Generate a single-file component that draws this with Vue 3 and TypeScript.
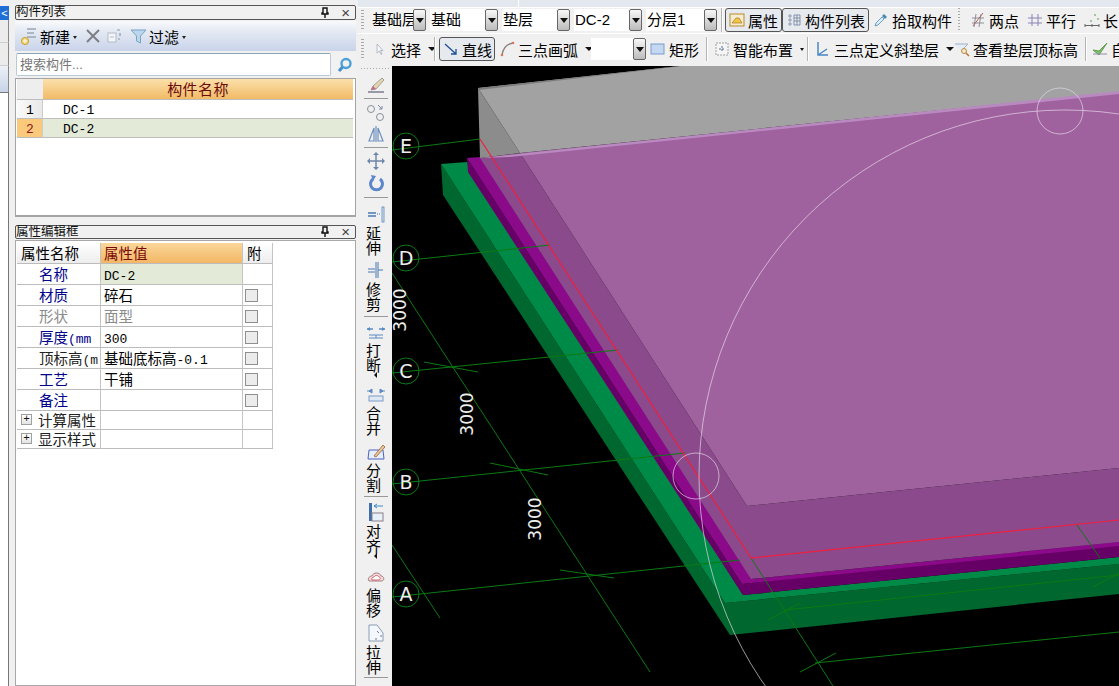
<template>
  <div class="app">
    <!-- collapsed nav strip -->
    <div class="strip">
      <div class="strip-tab">&lt;</div>
      <div class="strip-item"></div>
      <div class="strip-item"></div>
      <div class="strip-active"></div>
      <div class="strip-body"></div>
    </div>

    <div class="side">
      <div class="title-bar">
        <span class="title-text">构件列表</span>
        <svg class="pin" width="10" height="12" viewBox="0 0 10 12"><path d="M3 1h4v5h1v1H2V6h1zM5 7v4" fill="none" stroke="#111" stroke-width="1.4" /></svg>
        <span class="close">×</span>
      </div>
      <div class="list-tools">
        <svg width="18" height="20" viewBox="0 0 18 20">
          <path d="M7 3h9M7 7h7M7 11h9" stroke="#9aa5b5" stroke-width="1.3" />
          <circle cx="5" cy="15" r="3.6" fill="#f3d36a" stroke="#c9a23a" />
          <path d="M5 13v4M3 15h4" stroke="#fff" />
        </svg>
        <span class="tool-label">新建</span><i class="tiny-arrow"></i>
        <svg class="gap-wide" width="16" height="16" viewBox="0 0 16 16"><path d="M2 2l12 12M14 2L2 14" stroke="#7d7f84" stroke-width="2" /></svg>
        <svg class="gap-narrow" width="16" height="16" viewBox="0 0 16 16">
          <rect x="2" y="5" width="8" height="9" fill="#f4f5f8" stroke="#b4bac6" /><path d="M4 9h4" stroke="#b4bac6" />
          <path d="M11 2h3M14 5v3M12 11h2" stroke="#8e9ab0" stroke-width="1.2" />
        </svg>
        <svg class="gap-wide" width="17" height="16" viewBox="0 0 17 16"><path d="M1 2h15l-5.5 6v7l-4-2V8z" fill="#bcd6ec" stroke="#7ba3c6" /></svg>
        <span class="tool-label">过滤</span><i class="tiny-arrow"></i>
      </div>
      <div class="search-row">
        <div class="search-box">搜索构件...</div>
        <svg width="18" height="18" viewBox="0 0 18 18"><circle cx="10" cy="7.500" r="4.500" fill="none" stroke="#4d9fd8" stroke-width="2.400" /><path d="M6.500 11L3 15" stroke="#3f8fca" stroke-width="3" /></svg>
      </div>
      <div class="list-box">
        <div class="list-grid">
          <div class="cell corner"></div>
          <div class="cell head-orange">构件名称</div>
          <template v-for="(row, i) in listRows" :key="row">
            <div class="cell row-no" :class="{ 'row-no-on': i === 1 }">{{ i + 1 }}</div>
            <div class="cell row-name" :class="{ 'row-on': i === 1 }">{{ row }}</div>
          </template>
        </div>
      </div>

      <div class="title-bar second">
        <span class="title-text">属性编辑框</span>
        <svg class="pin" width="10" height="12" viewBox="0 0 10 12"><path d="M3 1h4v5h1v1H2V6h1zM5 7v4" fill="none" stroke="#111" stroke-width="1.4" /></svg>
        <span class="close">×</span>
      </div>
      <div class="prop-box">
        <div class="prop-grid">
          <div class="pc p-head">属性名称</div>
          <div class="pc p-head-on">属性值</div>
          <div class="pc p-head">附</div>
          <template v-for="p in props" :key="p.name">
            <div class="pc p-name" :class="[p.tone, { short: p.group }]">
              <span v-if="p.group" class="plus">+</span>
              <span class="name-text">{{ p.name }}<span v-if="p.unit" class="latin">{{ p.unit }}</span></span>
            </div>
            <div class="pc p-val" :class="{ 'p-val-on': p.selected, muted: p.tone === 'grey', short: p.group }">
              {{ p.value }}<span v-if="p.num" class="latin">{{ p.num }}</span>
            </div>
            <div class="pc p-chk" :class="{ short: p.group }"><i v-if="p.check" class="check"></i></div>
          </template>
        </div>
      </div>
    </div>

    <div class="main">
      <div class="top-strip"></div>
      <div class="bar">
        <i class="grip"></i>
        <template v-for="(it, i) in rowOne" :key="i">
          <div v-if="it.kind === 'combo'" class="combo" :class="{ plain: it.plain }" :style="{ width: it.w + 'px', marginLeft: it.x + 'px' }">
            <span class="combo-text">{{ it.text }}</span><i class="combo-btn"></i>
          </div>
          <i v-else-if="it.kind === 'sep'" class="bar-sep" :class="{ dotted: it.dotted }" :style="{ marginLeft: it.x + 'px' }"></i>
          <div v-else class="btn" :class="{ active: it.active }" :style="{ width: it.w + 'px', marginLeft: it.x + 'px', paddingLeft: (it.pad ?? 1) + 'px' }">
            <svg width="16" height="16" viewBox="0 0 16 16" v-html="barIcons[it.icon!]"></svg>
            <span>{{ it.text }}</span>
          </div>
        </template>
      </div>
      <div class="bar bar-two">
        <i class="grip"></i>
        <template v-for="(it, i) in rowTwo" :key="i">
          <div v-if="it.kind === 'combo'" class="combo" :style="{ width: it.w + 'px', marginLeft: it.x + 'px' }">
            <span class="combo-text">{{ it.text }}</span><i class="combo-btn"></i>
          </div>
          <i v-else-if="it.kind === 'sep'" class="bar-sep" :style="{ marginLeft: it.x + 'px' }"></i>
          <div v-else class="btn" :class="{ active: it.active }" :style="{ width: it.w + 'px', marginLeft: it.x + 'px', paddingLeft: (it.pad ?? 1) + 'px' }">
            <svg width="16" height="16" viewBox="0 0 16 16" v-html="barIcons[it.icon!]"></svg>
            <span>{{ it.text }}</span>
            <i v-if="it.arrow" class="drop" :class="{ small: it.arrow === 'small' }"></i>
          </div>
        </template>
      </div>

      <div class="work">
        <div class="vbar">
          <i class="vgrip"></i>
          <template v-for="(t, i) in vtools" :key="i">
            <i v-if="t.sep" class="vsep" :style="{ marginTop: t.mt + 'px' }"></i>
            <div v-else class="vtool" :style="{ marginTop: t.mt + 'px' }">
              <svg width="20" height="22" viewBox="0 0 20 22" v-html="vIcons[t.icon!]"></svg>
              <span v-for="ch in t.label" :key="ch" class="vchar">{{ ch }}</span>
              <i v-if="t.arrow" class="varrow"></i>
            </div>
          </template>
        </div>

        <svg class="canvas" viewBox="392 66 727 620" width="727" height="620">
          <rect x="392" y="66" width="727" height="620" fill="#000" />

          <!-- foundation, green -->
          <polygon points="441,164 443,195 730,635 1119,594 1119,564 725,603" fill="#00672f" />
          <polygon points="441,164 467,162 743,595 1119,557 1119,564 725,603" fill="#008a48" />
          <!-- cushion, purple -->
          <polygon points="467,158 468,172 743,595 1119,557 1119,540 742,584" fill="#660066" />
          <polygon points="467,158 481,157 752,579 1119,542 1119,546 742,584" fill="#8a0a8a" />
          <!-- translucent slab over the box -->
          <polygon points="480,158 751,579 1119,542 1119,468 747,506 520,153" fill="#8a4a8b" />
          <polygon points="520,153 747,506 1119,468 1119,92" fill="#a0619f" />
          <polygon points="478,88 480,158 520,153" fill="#8c8c8c" />
          <polygon points="478,88 680,66 1119,66 1119,92 520,153" fill="#a2a2a2" />
          <polygon points="480,158 1119,91 1119,94 510,157" fill="#b98ac0" />
          <polygon points="478,88 680,66 682,66 479,90" fill="#7d7d7d" />

          <!-- axis lines -->
          <g stroke="#0b7a12" stroke-width="1" fill="none">
            <path d="M392 150L480 139M392 262L550 245M392 373L618 350M392 484L685 453M392 597L740 560" />
            <path d="M392 273L650 672M392 545L440 618" />
            <path d="M424 362L478 372M490 463L548 475M560 570L614 578" />
            <path d="M751 558L833 686M768 620L800 603M785 610L1119 575M815 663L1119 632M800 672L836 653" />
            <path d="M1077 525L1100 558M1093 587L1119 573" />
          </g>
          <g stroke="#0a7a14" stroke-width="1" fill="none">
            <circle cx="406" cy="146" r="13" /><circle cx="406" cy="258" r="13" /><circle cx="406" cy="371" r="13" />
            <circle cx="406" cy="482" r="13" /><circle cx="406" cy="594" r="13" />
          </g>
          <path d="M480 139L751 558L1119 520" stroke="#ee2040" stroke-width="1.200" fill="none" />

          <!-- snap circles -->
          <g stroke="#e6dce8" stroke-opacity=".75" fill="none" stroke-width=".9">
            <circle cx="1065" cy="476" r="366" />
            <circle cx="696" cy="476" r="23" />
            <circle cx="1060" cy="111" r="23" />
          </g>

          <g class="axis-text">
            <text x="406" y="153">E</text><text x="406" y="265">D</text><text x="406" y="378">C</text>
            <text x="406" y="489">B</text><text x="406" y="601">A</text>
          </g>
          <g class="dim-text">
            <text transform="translate(406 310) rotate(-90)">3000</text>
            <text transform="translate(473 414) rotate(-90)">3000</text>
            <text transform="translate(541 519) rotate(-90)">3000</text>
          </g>
        </svg>
      </div>
    </div>
  </div>
</template>

<script setup lang="ts">
interface BarItem {
  kind: 'combo' | 'sep' | 'btn'
  x: number
  w?: number
  pad?: number
  text?: string
  icon?: string
  active?: boolean
  plain?: boolean
  dotted?: boolean
  arrow?: boolean | 'small'
}

interface VTool {
  mt: number
  sep?: boolean
  icon?: string
  label?: string
  arrow?: boolean
}

const listRows = ['DC-1', 'DC-2']

const props = [
  { name: '名称', value: '', num: 'DC-2', tone: 'blue', selected: true, check: false },
  { name: '材质', value: '碎石', tone: 'blue', check: true },
  { name: '形状', value: '面型', tone: 'grey', check: true },
  { name: '厚度', unit: '(mm', value: '', num: '300', tone: 'blue', check: true },
  { name: '顶标高', unit: '(m', value: '基础底标高', num: '-0.1', tone: 'dark', check: true },
  { name: '工艺', value: '干铺', tone: 'blue', check: true },
  { name: '备注', value: '', tone: 'blue', check: true },
  { name: '计算属性', value: '', tone: 'dark', group: true, check: false },
  { name: '显示样式', value: '', tone: 'dark', group: true, check: false }
]

// x = gap from the previous item
const rowOne: BarItem[] = [
  { kind: 'combo', x: 7, w: 55, text: '基础层', plain: true },
  { kind: 'combo', x: 4, w: 68, text: '基础' },
  { kind: 'combo', x: 4, w: 68, text: '垫层' },
  { kind: 'combo', x: 4, w: 68, text: 'DC-2' },
  { kind: 'combo', x: 4, w: 71, text: '分层1' },
  { kind: 'sep', x: 4 },
  { kind: 'btn', x: 2, w: 57, pad: 3, text: '属性', icon: 'prop', active: true },
  { kind: 'btn', x: 0, w: 87, pad: 3, text: '构件列表', icon: 'list', active: true },
  { kind: 'btn', x: 3, w: 81, pad: 0, text: '拾取构件', icon: 'dropper' },
  { kind: 'sep', x: 5, dotted: true },
  { kind: 'btn', x: 8, w: 52, text: '两点', icon: 'twopt' },
  { kind: 'btn', x: 5, w: 52, text: '平行', icon: 'parallel' },
  { kind: 'btn', x: 5, w: 37, text: '长', icon: 'length' }
]

const rowTwo: BarItem[] = [
  { kind: 'btn', x: 6, w: 64, text: '选择', icon: 'pointer', arrow: true },
  { kind: 'sep', x: 0 },
  { kind: 'btn', x: 3, w: 56, pad: 3, text: '直线', icon: 'line', active: true },
  { kind: 'btn', x: 2, w: 94, text: '三点画弧', icon: 'arc', arrow: true },
  { kind: 'combo', x: 0, w: 55, text: '' },
  { kind: 'btn', x: 2, w: 54, text: '矩形', icon: 'rect' },
  { kind: 'sep', x: 4 },
  { kind: 'btn', x: 4, w: 91, text: '智能布置', icon: 'smart', arrow: 'small' },
  { kind: 'sep', x: 4 },
  { kind: 'btn', x: 4, w: 139, text: '三点定义斜垫层', icon: 'slope', arrow: true },
  { kind: 'btn', x: 0, w: 128, text: '查看垫层顶标高', icon: 'view' },
  { kind: 'sep', x: 5 },
  { kind: 'btn', x: 3, w: 37, text: '自', icon: 'auto' }
]

const vtools: VTool[] = [
  { mt: 0, icon: 'brush' },
  { mt: 1, sep: true },
  { mt: 0, icon: 'circles' },
  { mt: 0, icon: 'mirror' },
  { mt: 1, sep: true },
  { mt: 0, icon: 'move' },
  { mt: 1, icon: 'rotate' },
  { mt: 1, sep: true },
  { mt: 3, icon: 'extend', label: '延伸' },
  { mt: 4, icon: 'trim', label: '修剪' },
  { mt: 4, sep: true },
  { mt: 1, icon: 'break', label: '打断', arrow: true },
  { mt: 5, icon: 'merge', label: '合并' },
  { mt: 5, icon: 'split', label: '分割' },
  { mt: 3, sep: true },
  { mt: 2, icon: 'align', label: '对齐', arrow: true },
  { mt: 6, icon: 'offset', label: '偏移' },
  { mt: 5, icon: 'stretch', label: '拉伸' },
  { mt: 2, sep: true }
]

const barIcons: Record<string, string> = {
  prop: '<rect x="1" y="2" width="14" height="12" fill="#f6ecd2" stroke="#b98a2c"/><path d="M3 11l4-5h3l3 5z" fill="#f3c648" stroke="#a8781c" stroke-width=".7"/>',
  list: '<path d="M3 3h2v2H3zM3 7h2v2H3zM3 11h2v2H3z" fill="none" stroke="#7f8ea8" stroke-width=".8"/><path d="M8 3h6v10H8zM8 6h6M8 9h6M11 3v10" fill="none" stroke="#6f7f9a" stroke-width=".8"/>',
  dropper: '<path d="M2 14l1-3 6-6 2 2-6 6z" fill="#d9ecf7" stroke="#6f9fc0"/><path d="M9 4l2-2 3 3-2 2z" fill="#4c86b4"/>',
  twopt: '<path d="M2 6h12M2 11h12M6 2l-2 13M11 2l-2 13" stroke="#8d8f99"/><path d="M13 1L3 14" stroke="#b5655c"/>',
  parallel: '<path d="M1 6h14M1 11h14M5 2v12M11 2v12" stroke="#8b83b5"/>',
  length: '<path d="M1 12v3M8 12v3M15 12v3M1 13.500h14" stroke="#666"/><path d="M10 3h2M14 6v2M6 9h2" stroke="#5b9a55"/>',
  pointer: '<path d="M5 3v9l2.500-2 1.500 3.500 1-.5-1.500-3.500h2.500z" fill="#f4f6fa" stroke="#a8b0bc" stroke-width=".8"/>',
  line: '<path d="M2 3l11 10M13 8v5H8" fill="none" stroke="#1f4f9a" stroke-width="1.300"/>',
  arc: '<path d="M3 14C4 7 8 3 14 2" fill="none" stroke="#8d7f7a" stroke-width="1.300"/><circle cx="3" cy="14" r="1.300" fill="#d9765f"/><circle cx="14" cy="2" r="1.300" fill="#d9765f"/>',
  rect: '<rect x="1" y="3" width="13" height="10" fill="#c4d8f2" stroke="#7c9ccb"/>',
  smart: '<rect x="2" y="2" width="12" height="12" fill="#f5f5f5" stroke="#a0a0a0" stroke-dasharray="2 1"/><path d="M8 5v6M5 8h6" stroke="#4f6f95" stroke-dasharray="2 1"/>',
  slope: '<path d="M3 1v13h10M3 14l9-6" fill="none" stroke="#4a87c4" stroke-width="1.500"/>',
  view: '<path d="M1 3h13L9 8v4" fill="#e6edf5" stroke="#9fb1c6"/><circle cx="10" cy="10" r="2.500" fill="#f6e7c4" stroke="#b58c4a"/><path d="M12 12l3 3" stroke="#b0763a" stroke-width="1.500"/>',
  auto: '<path d="M1 9l6 5 8-12-8 8z" fill="#7fc06a" stroke="#5f9c4c"/><path d="M1 13h14" stroke="#8f8fb0"/>'
}

const vIcons: Record<string, string> = {
  brush: '<path d="M2 18h16" stroke="#7c7c90" stroke-width="1.500"/><path d="M5 16l2-4 9-8 2 2-8 9z" fill="#e7d4a8" stroke="#a0a0a0"/><path d="M5 16l2-4 3 3z" fill="#c0688a"/>',
  circles: '<circle cx="5" cy="8" r="3.500" fill="none" stroke="#8a8f9c"/><circle cx="14" cy="16" r="3.500" fill="none" stroke="#8a8f9c"/><path d="M12 4l4 4M16 5v3h-3" stroke="#7a8aa8" fill="none"/>',
  mirror: '<path d="M10 3v16M8 5L3 18h5zM12 5l5 13h-5z" fill="none" stroke="#6f8fc0" stroke-width="1.200"/>',
  move: '<path d="M10 4v14M3 11h14" stroke="#6f86a8" stroke-width="1.500"/><path d="M10 2l3 3H7zM10 20l3-3H7zM1 11l3-3v6zM19 11l-3-3v6z" fill="#6f86a8"/>',
  rotate: '<path d="M14 6a6 6 0 1 1-7 0" fill="none" stroke="#5b86cc" stroke-width="3"/><path d="M5 2l5 1-3 5z" fill="#5b86cc"/>',
  extend: '<path d="M2 10h8M2 13h8" stroke="#4a78b0" stroke-width="1.300"/><path d="M11 11h4" stroke="#4a78b0" stroke-dasharray="1 1"/><rect x="16" y="4" width="2" height="15" fill="#dbe7f5" stroke="#4a78b0" stroke-width=".7"/>',
  trim: '<path d="M2 10h7M2 13h7M12 11h5" stroke="#4a78b0" stroke-width="1.200"/><path d="M10 3v16M12 3v16" stroke="#4a78b0" stroke-width="1"/>',
  break: '<path d="M1 9h6M13 9h6" stroke="#5a8ac0" stroke-width="1.300"/><path d="M1 9l3-2v4zM19 9l-3-2v4z" fill="#5a8ac0"/><path d="M3 15h14M3 18h14M10 15v3" stroke="#5a8ac0"/>',
  merge: '<path d="M3 8l3-2v4zM17 8l-3-2v4zM1 8h4M15 8h4" fill="#5a8ac0" stroke="#5a8ac0"/><rect x="3" y="13" width="14" height="5" fill="#dfe9f6" stroke="#7a9ac4"/>',
  split: '<path d="M3 10h14l1 9H2z" fill="#e6eefa" stroke="#4a63c0"/><path d="M8 16l9-11 2 2-9 10z" fill="#e9c79a" stroke="#a57a58"/>',
  align: '<rect x="3" y="2" width="3" height="18" fill="#3f6ea8"/><path d="M8 5h9M11 3L8 5l3 2" fill="none" stroke="#3f8ac8"/><rect x="6" y="12" width="11" height="8" fill="#e8f0fa" stroke="#8a7f88"/>',
  offset: '<path d="M3 16c-2-3 1-5 3-5 1-4 8-4 9 0 3 0 4 4 1 5z" fill="#f5d8d8" stroke="#a98088"/><path d="M6 15c-1-2 1-3 2-3 1-2 4-2 5 0 1 0 2 2 0 3z" fill="#fff" stroke="#c86870"/>',
  stretch: '<path d="M3 3h8l6 8v8H3z" fill="#f4f7fb" stroke="#8a9cb4"/><path d="M11 9l2 2M14 14h2M9 17h2" stroke="#6a7c94"/>'
}
</script>

<style>
html, body { margin: 0; background: #f0f0f0; overflow: hidden; }
</style>

<style scoped>
.app {
  display: flex;
  width: 1119px;
  height: 686px;
  overflow: hidden;
  background: #f0f0f0;
  color: #000;
  font-family: "Liberation Sans", "Noto Sans CJK SC", sans-serif;
  font-size: 15px;
}

/* left strip */
.strip {
  width: 9px;
  margin-right: 6px;
  flex: none;
  display: flex;
  flex-direction: column;
  padding-top: 6px;
}
.strip-tab {
  height: 14px;
  background: #1f6fd6;
  color: #fff;
  font-size: 11px;
  line-height: 14px;
  text-align: center;
}
.strip-item { height: 23px; background: #ececec; border-bottom: 1px solid #cfcfcf; border-right: 1px solid #888; box-sizing: border-box; }
.strip-active { height: 26px; background: linear-gradient(#edf1f8, #c8d3e8); border-right: 1px solid #888; box-sizing: border-box; }
.strip-body { flex: 1; background: #fff; border-right: 1px solid #777; border-top: 1px solid #777; }

/* side panels */
.side {
  width: 341px;
  flex: none;
  padding-top: 5px;
  margin-right: 2px;
  display: flex;
  flex-direction: column;
  box-sizing: border-box;
}
.title-bar {
  height: 15px;
  box-sizing: border-box;
  border: 1px solid #555;
  border-radius: 2px;
  background: #f1f1f1;
  display: flex;
  align-items: center;
  padding-right: 5px;
}
.title-bar.second { margin-top: 8px; height: 14px; }
.title-text { font-size: 12.500px; line-height: 13px; flex: 1; color: #111; white-space: nowrap; }
.pin { margin-right: 11px; }
.close { font-size: 15px; line-height: 12px; color: #444; }

.list-tools {
  height: 30px;
  margin-top: 1px;
  background: linear-gradient(#f9fafc, #e6ebf4 30%, #c9d4ea);
  display: flex;
  align-items: center;
  padding-left: 5px;
  box-sizing: border-box;
}
.list-tools svg { flex: none; }
.tool-label { margin-left: 2px; }
.tiny-arrow {
  margin-left: 3px;
  border: 2.500px solid transparent;
  border-top: 3px solid #222;
  margin-top: 4px;
}
.gap-wide { margin-left: 8px; }
.gap-narrow { margin-left: 5px; }

.search-row {
  height: 25px;
  margin-top: 1px;
  display: flex;
  align-items: center;
  gap: 5px;
  padding-left: 1px;
  background: #f1f1f1;
}
.search-box {
  width: 315px;
  height: 23px;
  box-sizing: border-box;
  border: 1px solid #b9c9d6;
  border-top-color: #8aa5b8;
  border-radius: 2px;
  background: #fff;
  color: #777;
  font-size: 13px;
  line-height: 21px;
  padding-left: 3px;
}
.list-box {
  height: 139px;
  box-sizing: border-box;
  margin-top: 1px;
  border: 1px solid #a4a4a4;
  border-bottom-width: 2px;
  background: #fff;
  padding: 0 2px 0 1px;
}
.list-grid {
  display: grid;
  grid-template-columns: 26px 1fr;
  grid-template-rows: 21px 19px 19px;
  font-family: "Liberation Mono", "Noto Sans CJK SC", monospace;
  font-size: 13px;
}
.cell { box-sizing: border-box; border-bottom: 1px solid #bdbdbd; line-height: 21px; }
.corner { background: #eee; }
.head-orange {
  background: linear-gradient(#fbe0ab, #f2bb66);
  color: #6a0a0a;
  text-align: center;
  font-family: "Noto Sans CJK SC", sans-serif;
  font-size: 15px;
  line-height: 19px;
  letter-spacing: .4px;
}
.row-no { background: linear-gradient(90deg, #fafafa, #e8e8e8); padding-left: 9px; border-right: 1px solid #ccc; overflow: hidden; }
.row-no-on { background: #fbc97c; color: #8a1a1a; }
.row-name { padding-left: 20px; overflow: hidden; }
.row-on { background: #e3ead8; }

.prop-box {
  flex: 1;
  margin-top: 1px;
  background: #fff;
  border: 1px solid #a8a8a8;
  padding: 2px 0 0 1px;
}
.prop-grid {
  display: grid;
  grid-template-columns: 84px 142px 30px;
  width: 256px;
}
.pc {
  box-sizing: border-box;
  height: 21px;
  border-bottom: 1px solid #bcbcbc;
  border-right: 1px solid #c4c4c4;
  line-height: 20px;
  white-space: nowrap;
  overflow: hidden;
  font-family: "Noto Sans CJK SC", sans-serif;
  font-size: 14.500px;
}
.pc.short { height: 19px; line-height: 18px; }
.p-head { background: linear-gradient(#fff, #ededed); padding-left: 4px; }
.p-head-on { background: linear-gradient(#fbd79a, #f2b765); color: #7a0a0a; padding-left: 3px; }
.p-name { padding-left: 22px; position: relative; }
.p-name.short { padding-left: 21px; }
.blue { color: #00008a; }
.grey { color: #8a8a8a; }
.dark { color: #222; }
.p-val { padding-left: 3px; }
.muted { color: #8a8a8a; }
.p-val-on { background: #e3ead8; }
.latin { font-family: "Liberation Mono", monospace; font-size: 13px; }
.plus {
  position: absolute;
  left: 4px;
  top: 3px;
  width: 11px;
  height: 11px;
  box-sizing: border-box;
  border: 1px solid #a0a0a0;
  background: linear-gradient(#fff, #e4e4e4);
  font-size: 11px;
  line-height: 9px;
  text-align: center;
  font-family: "Liberation Mono", monospace;
  color: #111;
}
.p-chk { display: flex; align-items: center; padding-left: 2px; }
.check { width: 13px; height: 13px; box-sizing: border-box; border: 1px solid #8f8f8f; background: #ececec; }

/* right side */
.main { flex: 1; min-width: 0; display: flex; flex-direction: column; }
.top-strip {
  height: 8px;
  box-sizing: border-box;
  border-bottom: 1px solid #fff;
  background: #e3e8ef linear-gradient(#fff, #fff) 160px 0 / 1px 100% no-repeat;
}
.bar {
  height: 24px;
  padding-bottom: 1px;
  display: flex;
  align-items: center;
  white-space: nowrap;
  overflow: hidden;
  border-bottom: 1px solid #fff;
}
.bar-two { height: 30px; padding-bottom: 2px; border-bottom: 0; }
.grip {
  width: 3px;
  margin-left: 3px;
  height: 20px;
  flex: none;
  background: repeating-linear-gradient(#aaa 0 1px, transparent 1px 3px);
}
.combo { flex: none; height: 22px; display: flex; background: #fff; box-sizing: border-box; }
.combo.plain { background: #f4f4f4; }
.combo-text { flex: 1; overflow: hidden; padding-left: 1px; line-height: 21px; white-space: nowrap; }
.combo-btn {
  width: 13px;
  flex: none;
  box-sizing: border-box;
  border: 1px solid #666;
  border-radius: 2px;
  background: linear-gradient(#f8f8f8, #bbb);
  position: relative;
}
.combo-btn::after {
  content: '';
  position: absolute;
  left: 1.500px;
  top: 8px;
  border: 4px solid transparent;
  border-top: 5px solid #111;
}
.bar-sep { width: 1px; height: 24px; flex: none; background: #b4b4b4; border-right: 1px solid #fff; }
.bar-sep.dotted { width: 2px; border: 0; background: repeating-linear-gradient(#aaa 0 1px, transparent 1px 3px); }
.btn {
  flex: none;
  height: 24px;
  box-sizing: border-box;
  display: flex;
  align-items: center;
  gap: 3px;
  border: 1px solid transparent;
  border-radius: 3px;
  white-space: nowrap;
}
.btn svg { flex: none; }
.btn.active { border-color: #555; background: #e6e9ee; }
.drop {
  margin-left: 4px;
  border: 4px solid transparent;
  border-top: 4px solid #111;
  margin-top: 4px;
}
.drop.small { border-width: 2.500px; border-top-width: 3px; margin-top: 3px; margin-left: 4px; }

.work { flex: 1; min-height: 0; display: flex; }
.vbar {
  width: 32px;
  flex: none;
  margin-left: 2px;
  display: flex;
  flex-direction: column;
  align-items: center;
  background: #f0f0f0;
  overflow: hidden;
}
.vgrip {
  width: 30px;
  height: 8px;
  flex: none;
  background: repeating-linear-gradient(90deg, #aaa 0 1px, transparent 1px 3px) 0 2px / 100% 1px no-repeat;
}
.vsep { width: 24px; height: 4px; flex: none; box-sizing: border-box; border-top: 1px solid #999; transform: translateY(1px); }
.vtool { display: flex; flex-direction: column; align-items: center; flex: none; }
.vtool svg { flex: none; }
.vchar {
  height: 15px;
  margin-right: 5px;
  line-height: 15px;
  font-size: 15px;
  font-family: "Noto Sans CJK SC", sans-serif;
}
.varrow {
  height: 6px;
  width: 0;
  box-sizing: border-box;
  border: 3px solid transparent;
  border-right: 3px solid #111;
  transform: translateX(-2px);
}
.canvas { display: block; flex: none; }
.axis-text text {
  fill: #eee;
  font-family: "DejaVu Sans", sans-serif;
  font-size: 19px;
  text-anchor: middle;
}
.dim-text text {
  fill: #eee;
  font-family: "DejaVu Sans", sans-serif;
  font-size: 17px;
  text-anchor: middle;
}
</style>
